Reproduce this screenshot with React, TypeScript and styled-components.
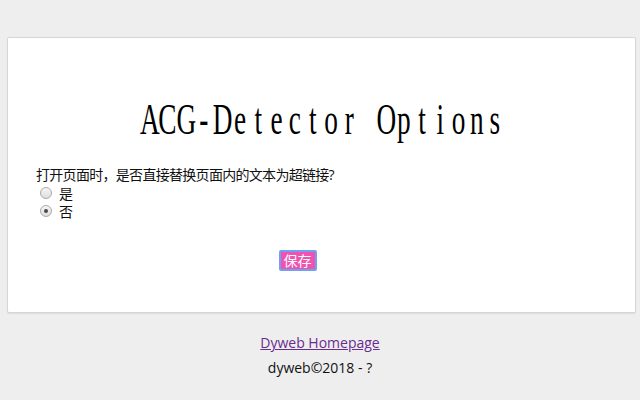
import styled, { createGlobalStyle } from "styled-components";

const GlobalStyle = createGlobalStyle`
  body {
    margin: 0;
    background: #eeeeee;
    font-family: "Open Sans", "Noto Sans CJK SC", sans-serif;
    color: #111;
  }
`;

const Page = styled.div`
  width: 640px;
  height: 400px;
  overflow: hidden;
  box-sizing: border-box;
  padding-top: 37px;
`;

const Card = styled.div`
  margin: 0 4px 0 7px;
  background: #fff;
  border: 1px solid #d6d6d6;
  border-radius: 2px;
  box-shadow: 0 1px 1px rgba(0, 0, 0, 0.08);
  padding: 0 28px 41px;
`;

const Title = styled.h1`
  margin: 51px 0 0;
  height: 60px;
  display: flex;
  justify-content: center;
  align-items: center;
  font-weight: normal;
`;

// serif title drawn as fixed cells so it reads like a monospace serif face
const TitleText = styled.span`
  display: inline-flex;
  font-family: "Liberation Serif", serif;
  font-size: 45px;
  line-height: 60px;
  color: #000;
  white-space: pre;
  transform: scaleX(0.6067);
`;

const TitleChar = styled.span`
  display: inline-block;
  width: 30px;
  text-align: center;
`;

const Question = styled.div`
  margin-top: 16px;
  font-size: 14px;
  line-height: 19px;
  letter-spacing: -0.7px;
`;

const OptionRow = styled.label`
  display: flex;
  align-items: center;
  height: 18px;
  font-size: 14px;
`;

const Radio = styled.input`
  appearance: none;
  width: 12px;
  height: 12px;
  margin: 0 7px 0 4px;
  border-radius: 50%;
  border: 1px solid #a9a9a9;
  background: linear-gradient(#f6f6f6, #dedede);
  box-sizing: border-box;
  position: relative;

  &:checked::after {
    content: "";
    position: absolute;
    left: 3px;
    top: 3px;
    width: 4px;
    height: 4px;
    border-radius: 50%;
    background: #4a4a4a;
  }
`;

const ButtonRow = styled.div`
  margin-top: 30px;
  display: flex;
  justify-content: center;
  padding-right: 48px;
`;

const SaveButton = styled.button`
  height: 21px;
  width: 38px;
  padding: 0;
  box-sizing: border-box;
  border: 2px solid #6ea2ef;
  border-radius: 2px;
  background: #f052b2;
  color: #fff;
  font-family: "Noto Sans CJK SC", sans-serif;
  font-size: 14px;
  line-height: 17px;
`;

const Footer = styled.div`
  margin-top: 20px;
  display: flex;
  flex-direction: column;
  align-items: center;
  font-size: 14px;
  line-height: 20px;
`;

const HomeLink = styled.a`
  color: #6a2c91;
  text-decoration: underline;
`;

const Copyright = styled.div`
  margin-top: 5px;
  color: #111;
`;

const title = "ACG-Detector Options";

export default function App() {
  return (
    <>
      <GlobalStyle />
      <Page>
        <Card>
          <Title>
            <TitleText aria-label={title}>
              {title.split("").map((c, i) => (
                <TitleChar key={i}>{c}</TitleChar>
              ))}
            </TitleText>
          </Title>
          <Question>打开页面时，是否直接替换页面内的文本为超链接?</Question>
          <OptionRow>
            <Radio type="radio" name="replace" value="yes" />是
          </OptionRow>
          <OptionRow>
            <Radio type="radio" name="replace" value="no" defaultChecked />否
          </OptionRow>
          <ButtonRow>
            <SaveButton>保存</SaveButton>
          </ButtonRow>
        </Card>
        <Footer>
          <HomeLink href="#">Dyweb Homepage</HomeLink>
          <Copyright>dyweb©2018 - ?</Copyright>
        </Footer>
      </Page>
    </>
  );
}
